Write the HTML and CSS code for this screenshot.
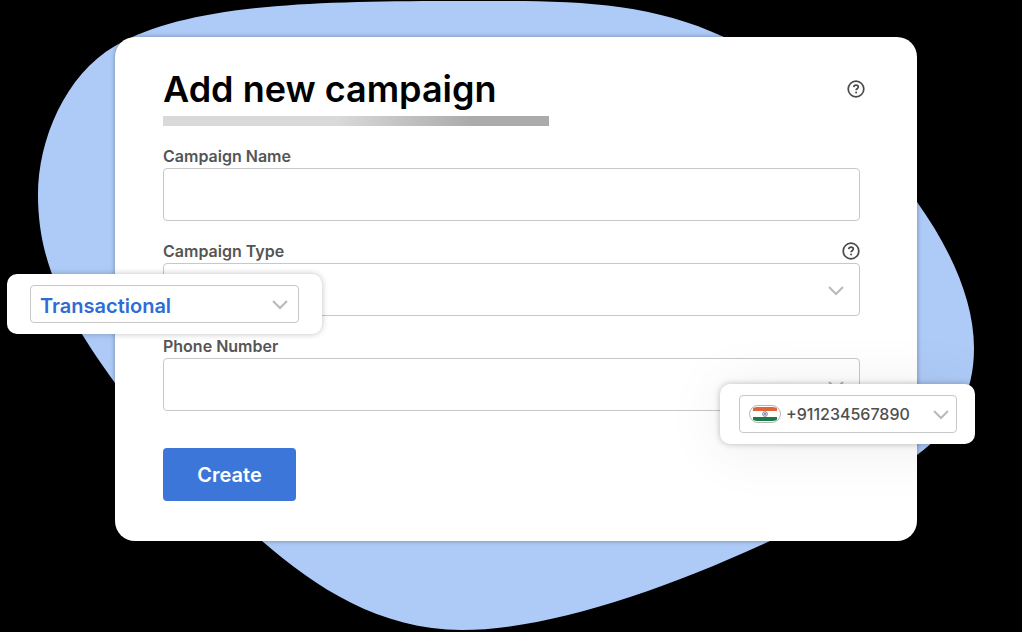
FILE: index.html
```html
<!DOCTYPE html>
<html lang="en">
<head>
    <meta charset="UTF-8">
    <meta name="viewport" content="width=device-width, initial-scale=1.0">
    <title>Add new campaign</title>
    <link rel="stylesheet" href="styles.css">
</head>
<body>
    <div class="stage">
        <svg class="blob" viewBox="0 0 1022 632" preserveAspectRatio="none" aria-hidden="true">
            <path d="M38 195C38 140 65 75 115 46C185 6 300 1 450 1C560 1 640 -2 724 37C800 72 865 130 917 202C950 248 974 300 974 348C974 395 955 427 917 455C870 488 820 518 770 541C660 592 545 630 462 630C380 630 315 587 262 541C205 492 155 439 115 383C67 316 38 265 38 195Z"/>
        </svg>
        <div class="card">
            <div class="card-header">
                <h1>Add new campaign</h1>
                <button type="button" class="help" aria-label="Help">
                    <svg viewBox="0 0 18 18"><circle cx="9" cy="9" r="7.8"/><path d="M6.7 7.1C6.9 5.8 7.8 5.1 9 5.1C10.4 5.1 11.3 5.9 11.3 7C11.3 8.7 9.1 8.7 9.1 10.2"/><circle class="dot" cx="9.1" cy="12.5" r="1"/></svg>
                </button>
            </div>
            <div class="underline"></div>
            <form>
                <div class="field">
                    <div class="label-row">
                        <label for="campaignName">Campaign Name</label>
                    </div>
                    <input type="text" id="campaignName" class="control">
                </div>
                <div class="field">
                    <div class="label-row">
                        <label for="campaignType">Campaign Type</label>
                        <button type="button" class="help" aria-label="Campaign type help">
                            <svg viewBox="0 0 18 18"><circle cx="9" cy="9" r="7.8"/><path d="M6.7 7.1C6.9 5.8 7.8 5.1 9 5.1C10.4 5.1 11.3 5.9 11.3 7C11.3 8.7 9.1 8.7 9.1 10.2"/><circle class="dot" cx="9.1" cy="12.5" r="1"/></svg>
                        </button>
                    </div>
                    <div class="select-box">
                        <select id="campaignType" class="control"><option></option></select>
                        <svg class="chevron" viewBox="0 0 16 10"><path d="M1 1L8 8L15 1"/></svg>
                        <div class="popout popout-type">
                            <div class="select-box small">
                                <select class="control type-value" aria-label="Selected campaign type"><option>Transactional</option></select>
                                <svg class="chevron" viewBox="0 0 16 10"><path d="M1 1L8 8L15 1"/></svg>
                            </div>
                        </div>
                    </div>
                </div>
                <div class="field">
                    <div class="label-row">
                        <label for="phoneNumber">Phone Number</label>
                    </div>
                    <div class="select-box">
                        <select id="phoneNumber" class="control"><option></option></select>
                        <svg class="chevron" viewBox="0 0 16 10"><path d="M1 1L8 8L15 1"/></svg>
                        <div class="popout popout-phone">
                            <div class="select-box small">
                                <select class="control phone-value" aria-label="Selected phone number"><option>+911234567890</option></select>
                                <svg class="flag" viewBox="0 0 32 18" aria-hidden="true">
                                    <defs><clipPath id="pill"><rect x="1" y="2" width="30" height="14" rx="7"/></clipPath></defs>
                                    <rect class="flag-edge" x=".5" y=".5" width="31" height="17" rx="8.5"/>
                                    <g clip-path="url(#pill)">
                                        <rect x="4" y="2" width="24" height="4" fill="#e2653a"/>
                                        <rect x="4" y="12" width="24" height="4" fill="#1b7a46"/>
                                    </g>
                                    <circle cx="16" cy="9" r="2.3" fill="none" stroke="#55557d" stroke-width=".8"/>
                                    <circle cx="16" cy="9" r=".9" fill="#55557d"/>
                                </svg>
                                <svg class="chevron" viewBox="0 0 16 10"><path d="M1 1L8 8L15 1"/></svg>
                            </div>
                        </div>
                    </div>
                </div>
                <button type="button" class="create">Create</button>
            </form>
        </div>
    </div>
</body>
</html>
```
FILE: styles.css
```css
* {
    box-sizing: border-box;
}
body {
    margin: 0;
    background-color: #000;
    font-family: Inter, "Liberation Sans", sans-serif;
    color: #4f4f4f;
}
.stage {
    position: relative;
    min-height: 100vh;
    padding: 37px 105px 91px 115px;
    overflow: hidden;
}
/* blue shape behind the card */
.blob {
    position: absolute;
    inset: 0;
    width: 100%;
    height: 100%;
    fill: #aecbf8;
}
.card {
    position: relative;
    padding: 28px 52px 40px 48px;
    background-color: #fff;
    border-radius: 20px;
    box-shadow: 0 0 5px rgba(0, 0, 0, 0.35);
}
.card-header {
    display: flex;
    justify-content: space-between;
    align-items: center;
}
h1 {
    margin: 0;
    font-size: 36px;
    line-height: 48px;
    font-weight: 600;
    color: #000;
}
.underline {
    width: 55%;
    height: 10px;
    margin: 3px 0 18px;
    background: linear-gradient(to right, #d9d9d9 45%, #ababab 80%);
}
form {
    padding-right: 5px;
}
.field {
    margin-bottom: 18px;
}
.label-row {
    display: flex;
    justify-content: space-between;
    align-items: center;
    height: 24px;
}
label {
    font-size: 16px;
    line-height: 24px;
    font-weight: 600;
    color: #555;
}
.help {
    display: flex;
    padding: 0;
    border: none;
    background: none;
    cursor: pointer;
}
.help svg {
    width: 18px;
    height: 18px;
    fill: none;
    stroke: #4a4a4a;
    stroke-width: 1.7;
}
.help .dot {
    fill: #4a4a4a;
    stroke: none;
}
.control {
    display: block;
    width: 100%;
    height: 53px;
    padding: 0 10px;
    border: 1px solid #c8c8c8;
    border-radius: 4px;
    background-color: transparent;
    font-family: inherit;
    appearance: none;
    outline: none;
}
.control:focus {
    border-color: #3b76d8;
}
/* select, arrow and flag share one grid cell */
.select-box {
    display: grid;
    align-items: center;
    position: relative;
}
.select-box > .control,
.select-box > .chevron,
.select-box > .flag {
    grid-area: 1 / 1;
}
.chevron {
    justify-self: end;
    width: 16px;
    height: 10px;
    margin-top: 2px;
    margin-right: 16px;
    fill: none;
    stroke: #b9b9b9;
    stroke-width: 2;
    pointer-events: none;
}
.small .control {
    height: 38px;
    background-color: #fff;
}
.small .chevron {
    position: relative;
    margin-right: 11px;
}
.popout {
    position: absolute;
    z-index: 1;
    padding: 11px 23px;
    background-color: #fff;
    border-radius: 10px;
}
.popout-type {
    top: 11px;
    left: -156px;
    width: 315px;
    box-shadow: 0 0 6px rgba(0, 0, 0, 0.25);
}
.popout-phone {
    top: 26px;
    right: -115px;
    width: 255px;
    padding: 11px 18px 11px 19px;
    box-shadow: 0 0 6px rgba(0, 0, 0, 0.25), 0 4px 60px rgba(0, 0, 0, 0.08);
}
.popout-phone .chevron {
    margin-right: 8px;
}
.small .type-value {
    padding-top: 4px;
    padding-left: 9px;
    font-size: 20px;
    font-weight: 600;
    color: #2f6cd3;
}
.phone-value {
    padding-left: 46px;
    font-size: 16px;
    font-weight: 500;
    color: #4f4f4f;
}
.flag {
    position: relative;
    width: 32px;
    height: 18px;
    margin-left: 10px;
    pointer-events: none;
}
.flag-edge {
    fill: #fff;
    stroke: #b5b5b5;
}
.create {
    display: block;
    width: 133px;
    height: 53px;
    margin-top: 37px;
    border: none;
    border-radius: 4px;
    background-color: #3b76d8;
    color: #fff;
    font-family: inherit;
    font-size: 20px;
    font-weight: 600;
    cursor: pointer;
}
```
